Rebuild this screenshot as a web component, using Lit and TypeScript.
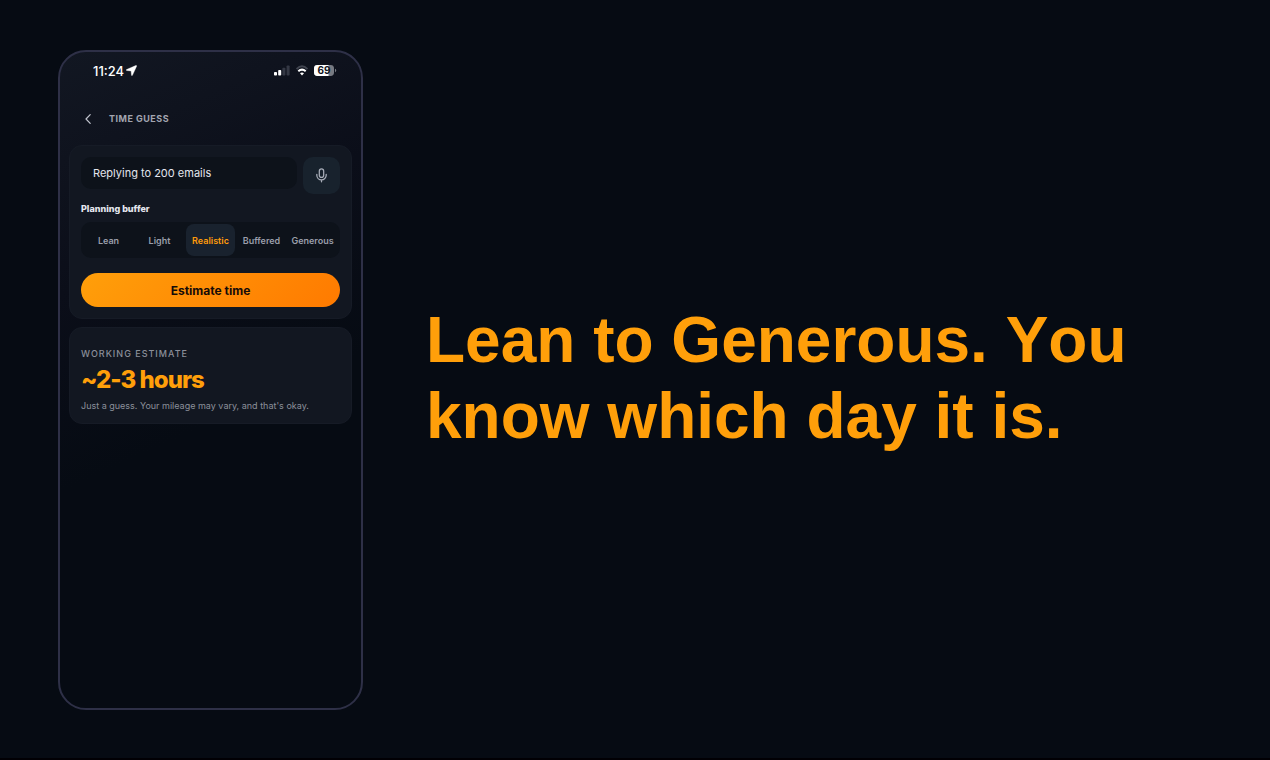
import { LitElement, html, css } from "lit";
import { customElement, state } from "lit/decorators.js";

@customElement("app-root")
export class AppRoot extends LitElement {
  @state() private buffer = "Realistic";

  private readonly buffers = ["Lean", "Light", "Realistic", "Buffered", "Generous"];

  static styles = css`
    :host {
      display: block;
      font-family: Inter, "Liberation Sans", sans-serif;
      color: #e4e6ee;
    }
    * {
      box-sizing: border-box;
    }
    h1, h2, p, fieldset {
      margin: 0;
      padding: 0;
      border: 0;
    }
    button, input {
      font: inherit;
      color: inherit;
      border: 0;
      margin: 0;
    }
    .page {
      display: flex;
      align-items: stretch;
      gap: 63px;
      min-height: 100vh;
      padding: 50px 58px 48px;
      background: #060b13;
      border-bottom: 2px solid #010004;
    }
    .phone {
      flex: 0 0 305px;
      display: flex;
      flex-direction: column;
      padding: 13px 9px;
      border: 2px solid #2e3047;
      border-radius: 28px;
      background: linear-gradient(155deg, #121722 0, #0f131e 100px, #0b0e19 220px, #060b13 400px);
    }
    .status {
      display: flex;
      justify-content: space-between;
      align-items: center;
      height: 11px;
      padding: 0 15px 0 24px;
    }
    .clock {
      display: flex;
      align-items: center;
      gap: 2px;
      font-size: 13px;
      line-height: 12px;
      font-weight: 500;
      color: #fff;
    }
    .signals {
      display: flex;
      align-items: center;
      gap: 6px;
    }
    svg {
      display: block;
    }
    .topbar {
      display: flex;
      align-items: center;
      gap: 11px;
      height: 24px;
      margin: 31px 0 14px;
      padding-left: 9px;
    }
    .back {
      display: grid;
      place-items: center;
      width: 20px;
      height: 24px;
      padding: 0;
      background: none;
      color: #c3c6d0;
    }
    .title {
      font-size: 9px;
      line-height: 12px;
      font-weight: 700;
      letter-spacing: 0.5px;
      color: #a2a5b0;
    }
    .card {
      border: 1px solid #161b26;
      border-radius: 13px;
      background: #121721;
      padding: 11px;
    }
    .card + .card {
      margin-top: 8px;
    }
    .entry {
      display: flex;
      align-items: flex-start;
      gap: 6px;
    }
    .task {
      flex: 1;
      min-width: 0;
      height: 32px;
      padding: 0 12px;
      border-radius: 10px;
      background: #0d121a;
      font-size: 11px;
      outline: none;
    }
    .mic {
      display: grid;
      place-items: center;
      width: 37px;
      height: 37px;
      padding: 0;
      border-radius: 10px;
      background: #18222d;
      color: #a8adb8;
    }
    .planning {
      margin-top: 9px;
    }
    .label {
      display: block;
      padding: 0;
      margin: 0 0 7px;
      font-size: 9px;
      line-height: 12px;
      font-weight: 800;
    }
    .segments {
      display: grid;
      grid-template-columns: repeat(5, minmax(0, 1fr));
      gap: 2px;
      padding: 2px 3px;
      border-radius: 10px;
      background: #0d121a;
    }
    .segment {
      position: relative;
      display: grid;
      place-items: center;
      height: 32px;
      border-radius: 8px;
      font-size: 9px;
      font-weight: 600;
      color: #9a9eaa;
    }
    .segment:has(input:checked) {
      background: #19222e;
      color: #ff9b0a;
    }
    .segment input {
      position: absolute;
      inset: 0;
      margin: 0;
      opacity: 0;
    }
    .estimate {
      display: block;
      width: 100%;
      height: 34px;
      margin-top: 15px;
      padding: 0;
      border-radius: 17px;
      background: linear-gradient(135deg, #ff9f0a, #ff7a00);
      font-size: 12px;
      font-weight: 700;
      color: #160b08;
    }
    .result {
      padding-top: 20px;
    }
    .eyebrow {
      font-size: 9px;
      line-height: 12px;
      font-weight: 500;
      letter-spacing: 1px;
      color: #8b8f9a;
    }
    .value {
      margin: 5px 0;
      font-size: 24px;
      line-height: 30px;
      font-weight: 800;
      letter-spacing: -1px;
      color: #ff9f0a;
    }
    .note {
      font-size: 9px;
      line-height: 12px;
      color: #8b8f9a;
    }
    .headline {
      flex: 1;
      align-self: center;
      padding-bottom: 4px;
      font-family: "Liberation Sans", Arial, sans-serif;
      font-size: 64px;
      line-height: 76px;
      font-weight: 700;
      font-kerning: none;
      color: #ff9f0a;
    }
  `;

  render() {
    return html`
      <main class="page">
        <section class="phone" aria-label="Time guess">
          <div class="status">
            <div class="clock">
              <span>11:24</span>
              <svg width="11" height="11" viewBox="0 0 11 11" aria-hidden="true">
                <path d="M9.8.5.6 4.6q-.9.6.1.9l4.400.4.4 4.300q.3.9.9.1L10.600 1.200q.2-1-.8-.7Z" fill="#fff" stroke="#fff" stroke-width="0.4" />
              </svg>
            </div>
            <div class="signals">
              <svg width="17" height="11" viewBox="0 0 17 11" aria-hidden="true">
                <rect x="1" y="7" width="3" height="3.5" rx="0.8" fill="#fff" />
                <rect x="5.2" y="5" width="3" height="5.5" rx="0.8" fill="#fff" />
                <rect x="9.4" y="2.8" width="3" height="7.7" rx="0.8" fill="#343844" />
                <rect x="13.6" y="0.5" width="3" height="10" rx="0.8" fill="#343844" />
              </svg>
              <svg width="12" height="11" viewBox="0 0 12 11" fill="none" aria-hidden="true">
                <path d="M.6 4Q6-1.5 11.4 4" stroke="#414550" stroke-width="1.8" />
                <path d="M2.300 6.300Q6 2.900 9.700 6.300" stroke="#fff" stroke-width="2" />
                <path d="M4 8.300Q6 6.600 8 8.300L6 10.400Z" fill="#fff" />
              </svg>
              <svg width="23" height="11" viewBox="0 0 23 11" role="img" aria-label="Battery 69 percent">
                <rect width="20" height="11" rx="3.4" fill="#777a82" />
                <path d="M3.4 0H14.5V11H3.4A3.4 3.4 0 0 1 0 7.6V3.4A3.4 3.4 0 0 1 3.4 0Z" fill="#fff" />
                <path d="M21 3.8q1.2.3 1.2 1.7T21 7.2Z" fill="#777a82" />
                <text x="10" y="9" text-anchor="middle" font-size="10" font-weight="700" fill="#11141e">69</text>
              </svg>
            </div>
          </div>
          <header class="topbar">
            <button class="back" aria-label="Back">
              <svg width="8" height="12" viewBox="0 0 8 12" fill="none" stroke="currentColor" stroke-width="1.2" stroke-linecap="round" stroke-linejoin="round">
                <path d="M6.2 1.7 2 6l4.200 4.300" />
              </svg>
            </button>
            <h2 class="title">TIME GUESS</h2>
          </header>
          <div class="card">
            <div class="entry">
              <input class="task" type="text" aria-label="Task" value="Replying to 200 emails" />
              <button class="mic" aria-label="Dictate task">
                <svg width="15" height="15" viewBox="0 0 24 24" fill="none" stroke="currentColor" stroke-width="2" stroke-linecap="round" stroke-linejoin="round">
                  <rect x="8.5" y="1.5" width="7" height="13.5" rx="3.5" />
                  <path d="M4.5 10v1.500a7.500 7.500 0 0 0 15 0V10M12 19v3" />
                </svg>
              </button>
            </div>
            <fieldset class="planning">
              <legend class="label">Planning buffer</legend>
              <div class="segments">
                ${this.buffers.map(
                  (name) => html`
                    <label class="segment">
                      <input
                        type="radio"
                        name="buffer"
                        .value=${name}
                        .checked=${this.buffer === name}
                        @change=${() => (this.buffer = name)}
                      />
                      <span>${name}</span>
                    </label>
                  `
                )}
              </div>
            </fieldset>
            <button class="estimate">Estimate time</button>
          </div>
          <div class="card result">
            <p class="eyebrow">WORKING ESTIMATE</p>
            <p class="value">~2-3 hours</p>
            <p class="note">Just a guess. Your mileage may vary, and that's okay.</p>
          </div>
        </section>
        <h1 class="headline">Lean to Generous. You know which day it is.</h1>
      </main>
    `;
  }
}
